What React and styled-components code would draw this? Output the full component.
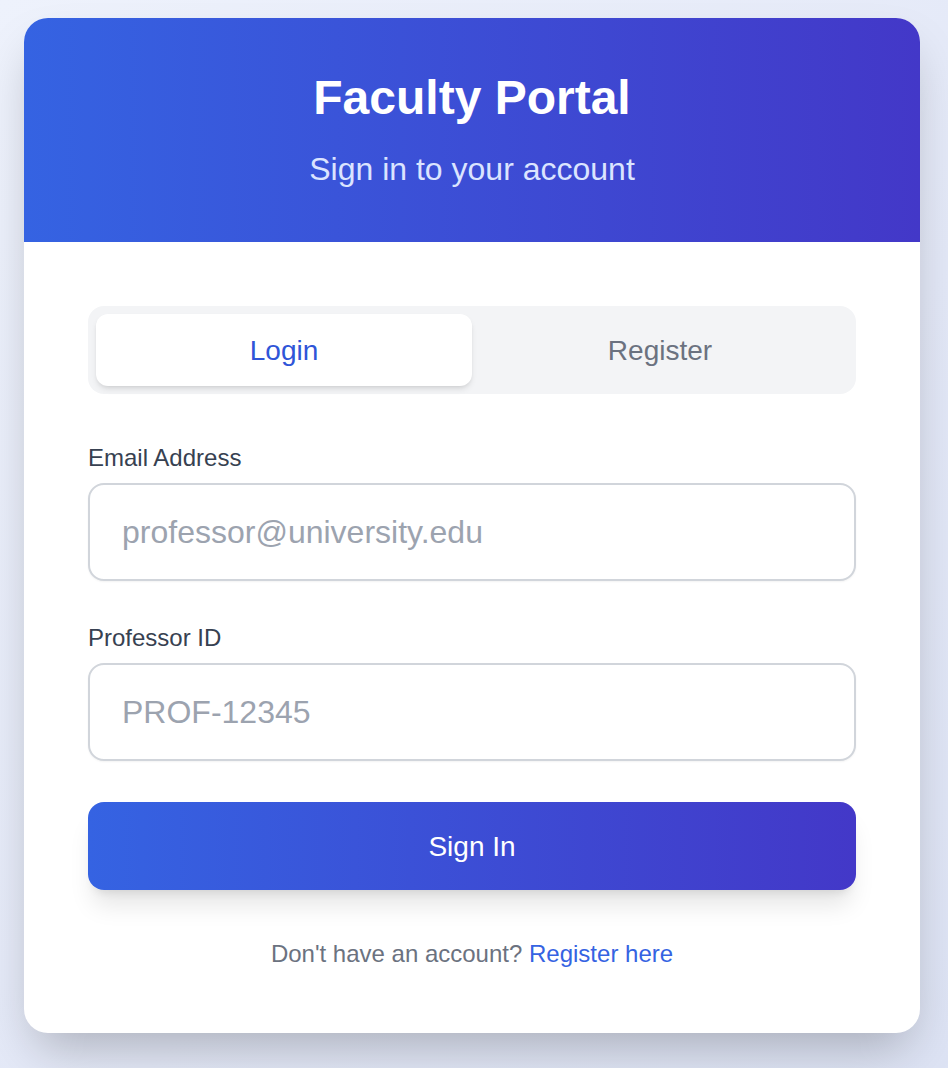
import React, { useState } from "react";
import styled, { createGlobalStyle } from "styled-components";

const Global = createGlobalStyle`
  * { box-sizing: border-box; }
  html, body { margin: 0; padding: 0; }
  body {
    font-family: "Liberation Sans", Arial, sans-serif;
    background: linear-gradient(135deg, #eef2fc 0%, #e3e8f7 60%, #dde3f4 100%);
    min-height: 1068px;
  }
`;

const Page = styled.div`
  min-height: 1068px;
  padding: 18px 28px 0 24px;
`;

const Card = styled.div`
  width: 896px;
  background: #ffffff;
  border-radius: 24px;
  overflow: hidden;
  box-shadow: 0 25px 50px -12px rgba(0, 0, 0, 0.25);
`;

const Header = styled.header`
  background: linear-gradient(90deg, #3563e2 0%, #4338c8 100%);
  padding: 52px 32px 53px;
  text-align: center;
  color: #ffffff;
`;

const Title = styled.h1`
  margin: 0;
  font-size: 48px;
  line-height: 56px;
  font-weight: 700;
`;

const Subtitle = styled.p`
  margin: 23px 0 0;
  font-size: 32px;
  line-height: 40px;
  color: #dbe4ff;
`;

const Body = styled.div`
  padding: 64px 64px 63px;
`;

const Tabs = styled.div`
  display: grid;
  grid-template-columns: 1fr 1fr;
  padding: 8px;
  background: #f3f4f6;
  border-radius: 16px;
`;

const Tab = styled.button`
  height: 72px;
  padding: 2px 0 0;
  border: none;
  border-radius: 12px;
  font-family: inherit;
  font-size: 28px;
  cursor: pointer;
  background: ${(p) => (p.$active ? "#ffffff" : "transparent")};
  color: ${(p) => (p.$active ? "#2f55d8" : "#6b7280")};
  box-shadow: ${(p) =>
    p.$active
      ? "0 4px 6px -1px rgba(0,0,0,0.1), 0 2px 4px -2px rgba(0,0,0,0.1)"
      : "none"};
`;

const Form = styled.form`
  display: flex;
  flex-direction: column;
  gap: 41px;
  margin-top: 48px;
`;

const Field = styled.div`
  display: flex;
  flex-direction: column;
  gap: 9px;
`;

const Label = styled.label`
  font-size: 24px;
  line-height: 32px;
  color: #374151;
`;

const Input = styled.input`
  height: 98px;
  width: 100%;
  border: 2px solid #d1d5db;
  border-radius: 16px;
  padding: 0 32px;
  font-family: inherit;
  font-size: 32px;
  color: #111827;
  background: #fff;
  box-shadow: 0 1px 2px rgba(0, 0, 0, 0.05);
  outline: none;
  &::placeholder { color: #9ca3af; }
`;

const Submit = styled.button`
  height: 88px;
  padding: 2px 0 0;
  border: none;
  border-radius: 16px;
  background: linear-gradient(90deg, #3563e2 0%, #4338c8 100%);
  color: #ffffff;
  font-family: inherit;
  font-size: 28px;
  cursor: pointer;
  box-shadow: 0 20px 25px -5px rgba(0, 0, 0, 0.1), 0 8px 10px -6px rgba(0, 0, 0, 0.1);
`;

const Footer = styled.p`
  margin: 48px 0 0;
  text-align: center;
  font-size: 24px;
  line-height: 32px;
  color: #6b7280;
`;

const Link = styled.a`
  color: #3563e2;
  text-decoration: none;
`;

export default function App() {
  const [tab, setTab] = useState("login");
  return (
    <>
      <Global />
      <Page>
        <Card>
          <Header>
            <Title>Faculty Portal</Title>
            <Subtitle>Sign in to your account</Subtitle>
          </Header>
          <Body>
            <Tabs>
              <Tab $active={tab === "login"} onClick={() => setTab("login")}>Login</Tab>
              <Tab $active={tab === "register"} onClick={() => setTab("register")}>Register</Tab>
            </Tabs>
            <Form onSubmit={(e) => e.preventDefault()}>
              <Field>
                <Label>Email Address</Label>
                <Input type="email" placeholder="professor@university.edu" />
              </Field>
              <Field>
                <Label>Professor ID</Label>
                <Input type="text" placeholder="PROF-12345" />
              </Field>
              <Submit type="submit">Sign In</Submit>
            </Form>
            <Footer>
              Don't have an account? <Link href="#">Register here</Link>
            </Footer>
          </Body>
        </Card>
      </Page>
    </>
  );
}
